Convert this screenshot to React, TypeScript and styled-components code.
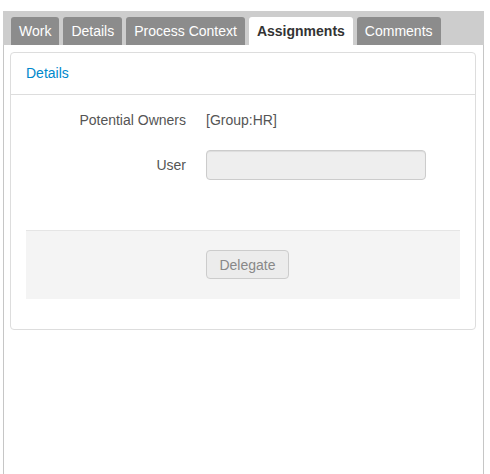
import styled, { createGlobalStyle } from "styled-components"

const Global = createGlobalStyle`
body{margin:0;background:#fff;font-family:"Liberation Sans",Arial,sans-serif;font-size:14px;}
`

const tabs = ["Work", "Details", "Process Context", "Assignments", "Comments"]

function App() {
  const active = "Assignments"
  return (
    <Page>
      <Global />
      <Frame>
        <TabBar>
          {tabs.map((t) => (
            <Tab key={t} $active={t === active}>{t}</Tab>
          ))}
        </TabBar>
        <Content>
          <Panel>
            <PanelHeader>Details</PanelHeader>
            <PanelBody>
              <Row>
                <Label>Potential Owners</Label>
                <Value>[Group:HR]</Value>
              </Row>
              <Row $tall>
                <Label>User</Label>
                <Input disabled />
              </Row>
              <Actions>
                <Button disabled>Delegate</Button>
              </Actions>
            </PanelBody>
          </Panel>
        </Content>
      </Frame>
    </Page>
  )
}

const Page = styled.div`
padding:11px 0 0 3px;
`
const Frame = styled.div`
width:479px;
height:463px;
border-left:1px solid #c6c6c6;
border-right:1px solid #c6c6c6;
`
const TabBar = styled.div`
display:flex;
gap:4px;
height:34px;
box-sizing:border-box;
padding:6px 0 0 8px;
margin:0 -1px;
background:#cdcdcd;
`
const Tab = styled.div<{ $active?: boolean }>`
height:28px;
line-height:29px;
padding:0 8px;
border-radius:3px 3px 0 0;
font-size:14px;
background:${(p) => (p.$active ? "#fff" : "#8c8c8c")};
color:${(p) => (p.$active ? "#333" : "#fff")};
font-weight:${(p) => (p.$active ? 700 : 400)};
`
const Content = styled.div`
padding:7px 7px 0 6px;
`
const Panel = styled.div`
border:1px solid #ddd;
border-radius:4px;
`
const PanelHeader = styled.div`
height:41px;
line-height:41px;
padding-left:15px;
font-size:14px;
color:#0088cc;
border-bottom:1px solid #ddd;
`
const PanelBody = styled.div`
padding:15px 15px 30px;
`
const Row = styled.div<{ $tall?: boolean }>`
display:flex;
align-items:center;
gap:20px;
height:${(p) => (p.$tall ? 30 : 20)}px;
margin-bottom:20px;
font-size:14px;
color:#555;
`
const Label = styled.div`
width:160px;
text-align:right;
`
const Value = styled.div`
color:#555;
`
const Input = styled.input`
width:220px;
height:30px;
box-sizing:border-box;
background:#eee;
border:1px solid #ccc;
border-radius:4px;
box-shadow:inset 0 1px 1px rgba(0,0,0,0.075);
`
const Actions = styled.div`
margin-top:50px;
padding:19px 0 20px 180px;
background:#f4f4f4;
border-top:1px solid #e5e5e5;
`
const Button = styled.button`
width:83px;
height:29px;
padding:0;
font-family:inherit;
font-size:14px;
color:#888;
background:#ececec;
border:1px solid #ccc;
border-radius:4px;
`

export default App
